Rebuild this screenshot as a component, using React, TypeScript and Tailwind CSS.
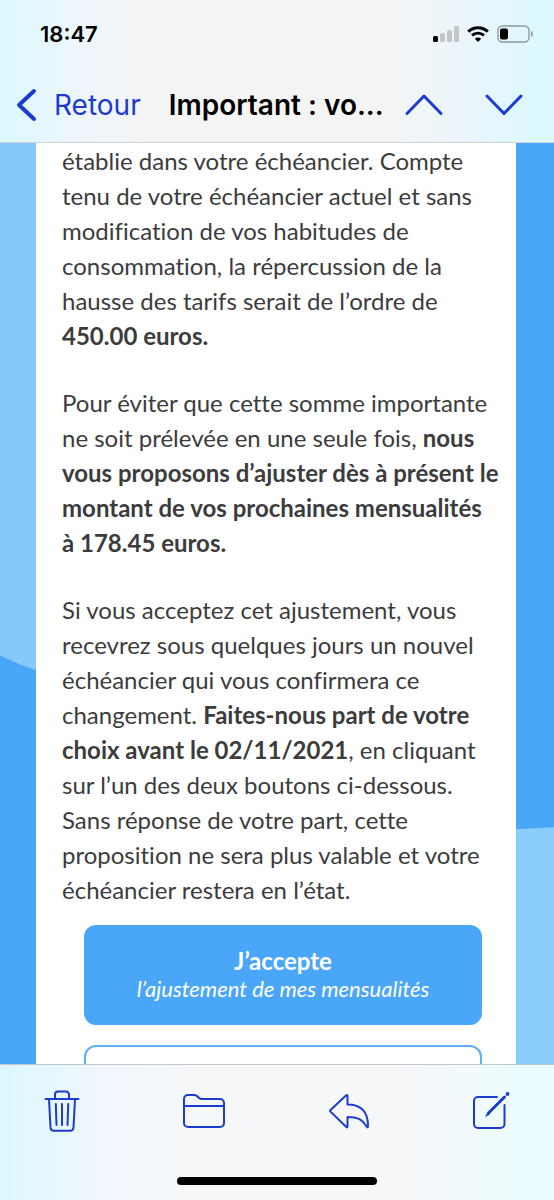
import type { ReactNode } from 'react'

interface IconButtonProps {
  label: string
  children: ReactNode
}

function IconButton({ label, children }: IconButtonProps) {
  return (
    <button type="button" aria-label={label} className="shrink-0 cursor-pointer text-[#1b3ccf]">
      {children}
    </button>
  )
}

function StatusBar() {
  return (
    <div className="flex h-17 items-center justify-between pr-5 pl-10 text-black">
      <time className="text-[22px] font-semibold">18:47</time>
      <div className="flex items-center gap-2">
        {/* Signal */}
        <svg width="26" height="16" viewBox="0 0 26 16" aria-hidden="true">
          <rect x="0" y="10" width="5" height="6" rx="1.5" fill="#000" />
          <rect x="7" y="7" width="5" height="9" rx="1.5" fill="#c5c6c8" />
          <rect x="14" y="4" width="5" height="12" rx="1.5" fill="#c5c6c8" />
          <rect x="21" y="0" width="5" height="16" rx="1.5" fill="#c5c6c8" />
        </svg>
        {/* Wifi */}
        <svg width="22" height="16" viewBox="0 0 22 16" fill="none" stroke="#000" aria-hidden="true">
          <path d="M1.2 5.6C6.7.3 15.3.3 20.8 5.6" strokeWidth="3" />
          <path d="M5 9.4c3.4-3.1 8.6-3.1 12 0" strokeWidth="2.8" />
          <path d="M11 16l-3.2-3.3c1.8-1.6 4.6-1.6 6.4 0z" fill="#000" stroke="none" />
        </svg>
        {/* Battery */}
        <svg width="37" height="18" viewBox="0 0 37 18" aria-hidden="true">
          <rect x="1" y="1" width="31" height="16" rx="4.5" fill="none" stroke="#8f9a9e" strokeWidth="1.4" />
          <rect x="3" y="3.5" width="8" height="11" rx="2" fill="#000" />
          <path d="M34 6c2.4.8 2.4 5.200 0 6z" fill="#8f9a9e" />
        </svg>
      </div>
    </div>
  )
}

function NavBar() {
  return (
    <nav className="flex h-[74px] items-center pr-[30px] pl-4">
      <a href="#retour" className="flex shrink-0 items-center gap-4 text-[28px] text-[#1b3ccf]">
        <svg
          width="22"
          height="34"
          viewBox="0 0 22 34"
          fill="none"
          stroke="currentColor"
          strokeWidth="4"
          strokeLinecap="round"
          strokeLinejoin="round"
          aria-hidden="true"
        >
          <path d="M18 3L3 17l15 14" />
        </svg>
        Retour
      </a>
      <h1 className="ml-7 flex-1 text-[28px] font-semibold whitespace-nowrap text-black">Important : vo...</h1>
      <div className="flex gap-10">
        <IconButton label="Message précédent">
          <svg width="40" height="24" viewBox="0 0 40 24" fill="none" stroke="currentColor" strokeWidth="3" strokeLinecap="round" strokeLinejoin="round">
            <path d="M3 20.500L20 3l17 17.500" />
          </svg>
        </IconButton>
        <IconButton label="Message suivant">
          <svg width="40" height="24" viewBox="0 0 40 24" fill="none" stroke="currentColor" strokeWidth="3" strokeLinecap="round" strokeLinejoin="round">
            <path d="M3 3l17 17.500L37 3" />
          </svg>
        </IconButton>
      </div>
    </nav>
  )
}

function Toolbar() {
  return (
    <footer className="shrink-0 border-t border-[#c3c7cb] bg-[linear-gradient(90deg,#dcf7ff_0%,#f0f7fd_18%,#f6f7f9_35%,#f6f7f9_72%,#ecfdff_95%)]">
      <div className="flex h-23 items-center justify-between px-11">
        <IconButton label="Supprimer">
          <svg width="36" height="44" viewBox="0 0 36 44" fill="none" stroke="currentColor" strokeWidth="2" strokeLinecap="round" strokeLinejoin="round">
            <path d="M1.500 10h33M11 10V5.500A3 3 0 0 1 14 2.500h8a3 3 0 0 1 3 3V10" />
            <path d="M5 10l1.500 28.500a3.500 3.500 0 0 0 3.500 3.300h16a3.500 3.500 0 0 0 3.500-3.300L31 10" />
            <path d="M11.800 15l.7 21M18 15v21M24.200 15l-.7 21" />
          </svg>
        </IconButton>
        <IconButton label="Déplacer">
          <svg width="44" height="36" viewBox="0 0 44 36" fill="none" stroke="currentColor" strokeWidth="2" strokeLinejoin="round">
            <path d="M2 30V6a4 4 0 0 1 4-4h6.500c3.500 0 3.500 4 7 4H38a4 4 0 0 1 4 4v20a4 4 0 0 1-4 4H6a4 4 0 0 1-4-4zM2 13h40" />
          </svg>
        </IconButton>
        <IconButton label="Répondre">
          <svg width="42" height="36" viewBox="0 0 42 36" fill="none" stroke="currentColor" strokeWidth="2" strokeLinejoin="round">
            <path d="M2.500 17L18 2.600q1.500-1.300 1.500.4V11.500C33 11.500 40 19 40 33q0 2.500-1.600.5C34 26 29 24 19.500 24v9.500q0 1.600-1.400.3L2.500 18.600q-.9-.8 0-1.600z" />
          </svg>
        </IconButton>
        <IconButton label="Nouveau message">
          <svg width="38" height="38" viewBox="0 0 38 38" fill="none" stroke="currentColor" strokeWidth="2" strokeLinecap="round" strokeLinejoin="round">
            <path d="M25 5H6a4 4 0 0 0-4 4v23a4 4 0 0 0 4 4h22.500a4 4 0 0 0 4-4V13" />
            <path d="M32.500 5L17 20.500" strokeWidth="3" />
            <path d="M15.500 20l-2.500 5 5-2.500z" fill="currentColor" stroke="none" />
            <circle cx="35.500" cy="2" r="1.900" fill="currentColor" stroke="none" />
          </svg>
        </IconButton>
      </div>
      {/* Home indicator */}
      <div className="flex justify-center pt-5 pb-[15px]">
        <div className="h-2 w-[36%] rounded-full bg-black" />
      </div>
    </footer>
  )
}

function Message() {
  return (
    <main className="relative min-h-0 flex-1 overflow-hidden bg-[#4aa6f8] pr-[38px] pl-9">
      {/* Two-tone wave behind the card */}
      <svg className="absolute inset-0 size-full" viewBox="0 0 554 922" preserveAspectRatio="none" aria-hidden="true">
        <path d="M0 0H37V528Q18 522 0 513z" fill="#84c9fa" />
        <path d="M515 687L554 685V922H515z" fill="#8bcdfa" />
      </svg>

      <article className="relative min-h-full bg-white pr-2.5 pl-6.5 font-[Lato,sans-serif] text-2xl leading-[35px] text-[#3c3c3c] [font-variant-ligatures:none]">
        <div className="space-y-8">
          <p>
            établie dans votre échéancier. Compte tenu de votre échéancier actuel et sans modification de vos habitudes
            de consommation, la répercussion de la hausse des tarifs serait de l’ordre de <b>450.00 euros.</b>
          </p>
          <p>
            Pour éviter que cette somme importante ne soit prélevée en une seule fois,{' '}
            <b>nous vous proposons d’ajuster dès à présent le montant de vos prochaines mensualités à&nbsp;178.45 euros.</b>
          </p>
          <p>
            Si vous acceptez cet ajustement, vous recevrez sous quelques jours un nouvel échéancier qui vous confirmera
            ce changement. <b>Faites-nous part de votre choix avant le 02/11/2021</b>, en cliquant sur l’un des deux
            boutons ci-dessous. Sans réponse de votre part, cette proposition ne sera plus valable et votre échéancier
            restera en l’état.
          </p>
        </div>

        <div className="mt-4.5 flex flex-col gap-5 pr-6 pl-5.5">
          <button
            type="button"
            className="flex h-25 w-full cursor-pointer flex-col items-center justify-center rounded-xl bg-[#4aa6f8] text-white"
          >
            <span className="text-2xl leading-7 font-bold">J’accepte</span>
            <span className="text-[22px] leading-7 italic">l’ajustement de mes mensualités</span>
          </button>
          <button
            type="button"
            aria-label="Autre choix"
            className="h-25 w-full cursor-pointer rounded-xl border-2 border-[#5eaff5] bg-white"
          />
        </div>
      </article>
    </main>
  )
}

export default function App() {
  return (
    <div className="flex h-screen flex-col overflow-hidden bg-white font-[Inter,sans-serif]">
      <header className="shrink-0 border-b border-[#d0d3d6] bg-[linear-gradient(90deg,#dcf8ff_0%,#edf6fc_14%,#f4f4f4_28%,#f4f4f4_68%,#ebf5fb_84%,#dcf8ff_97%)]">
        <StatusBar />
        <NavBar />
      </header>
      <Message />
      <Toolbar />
    </div>
  )
}
